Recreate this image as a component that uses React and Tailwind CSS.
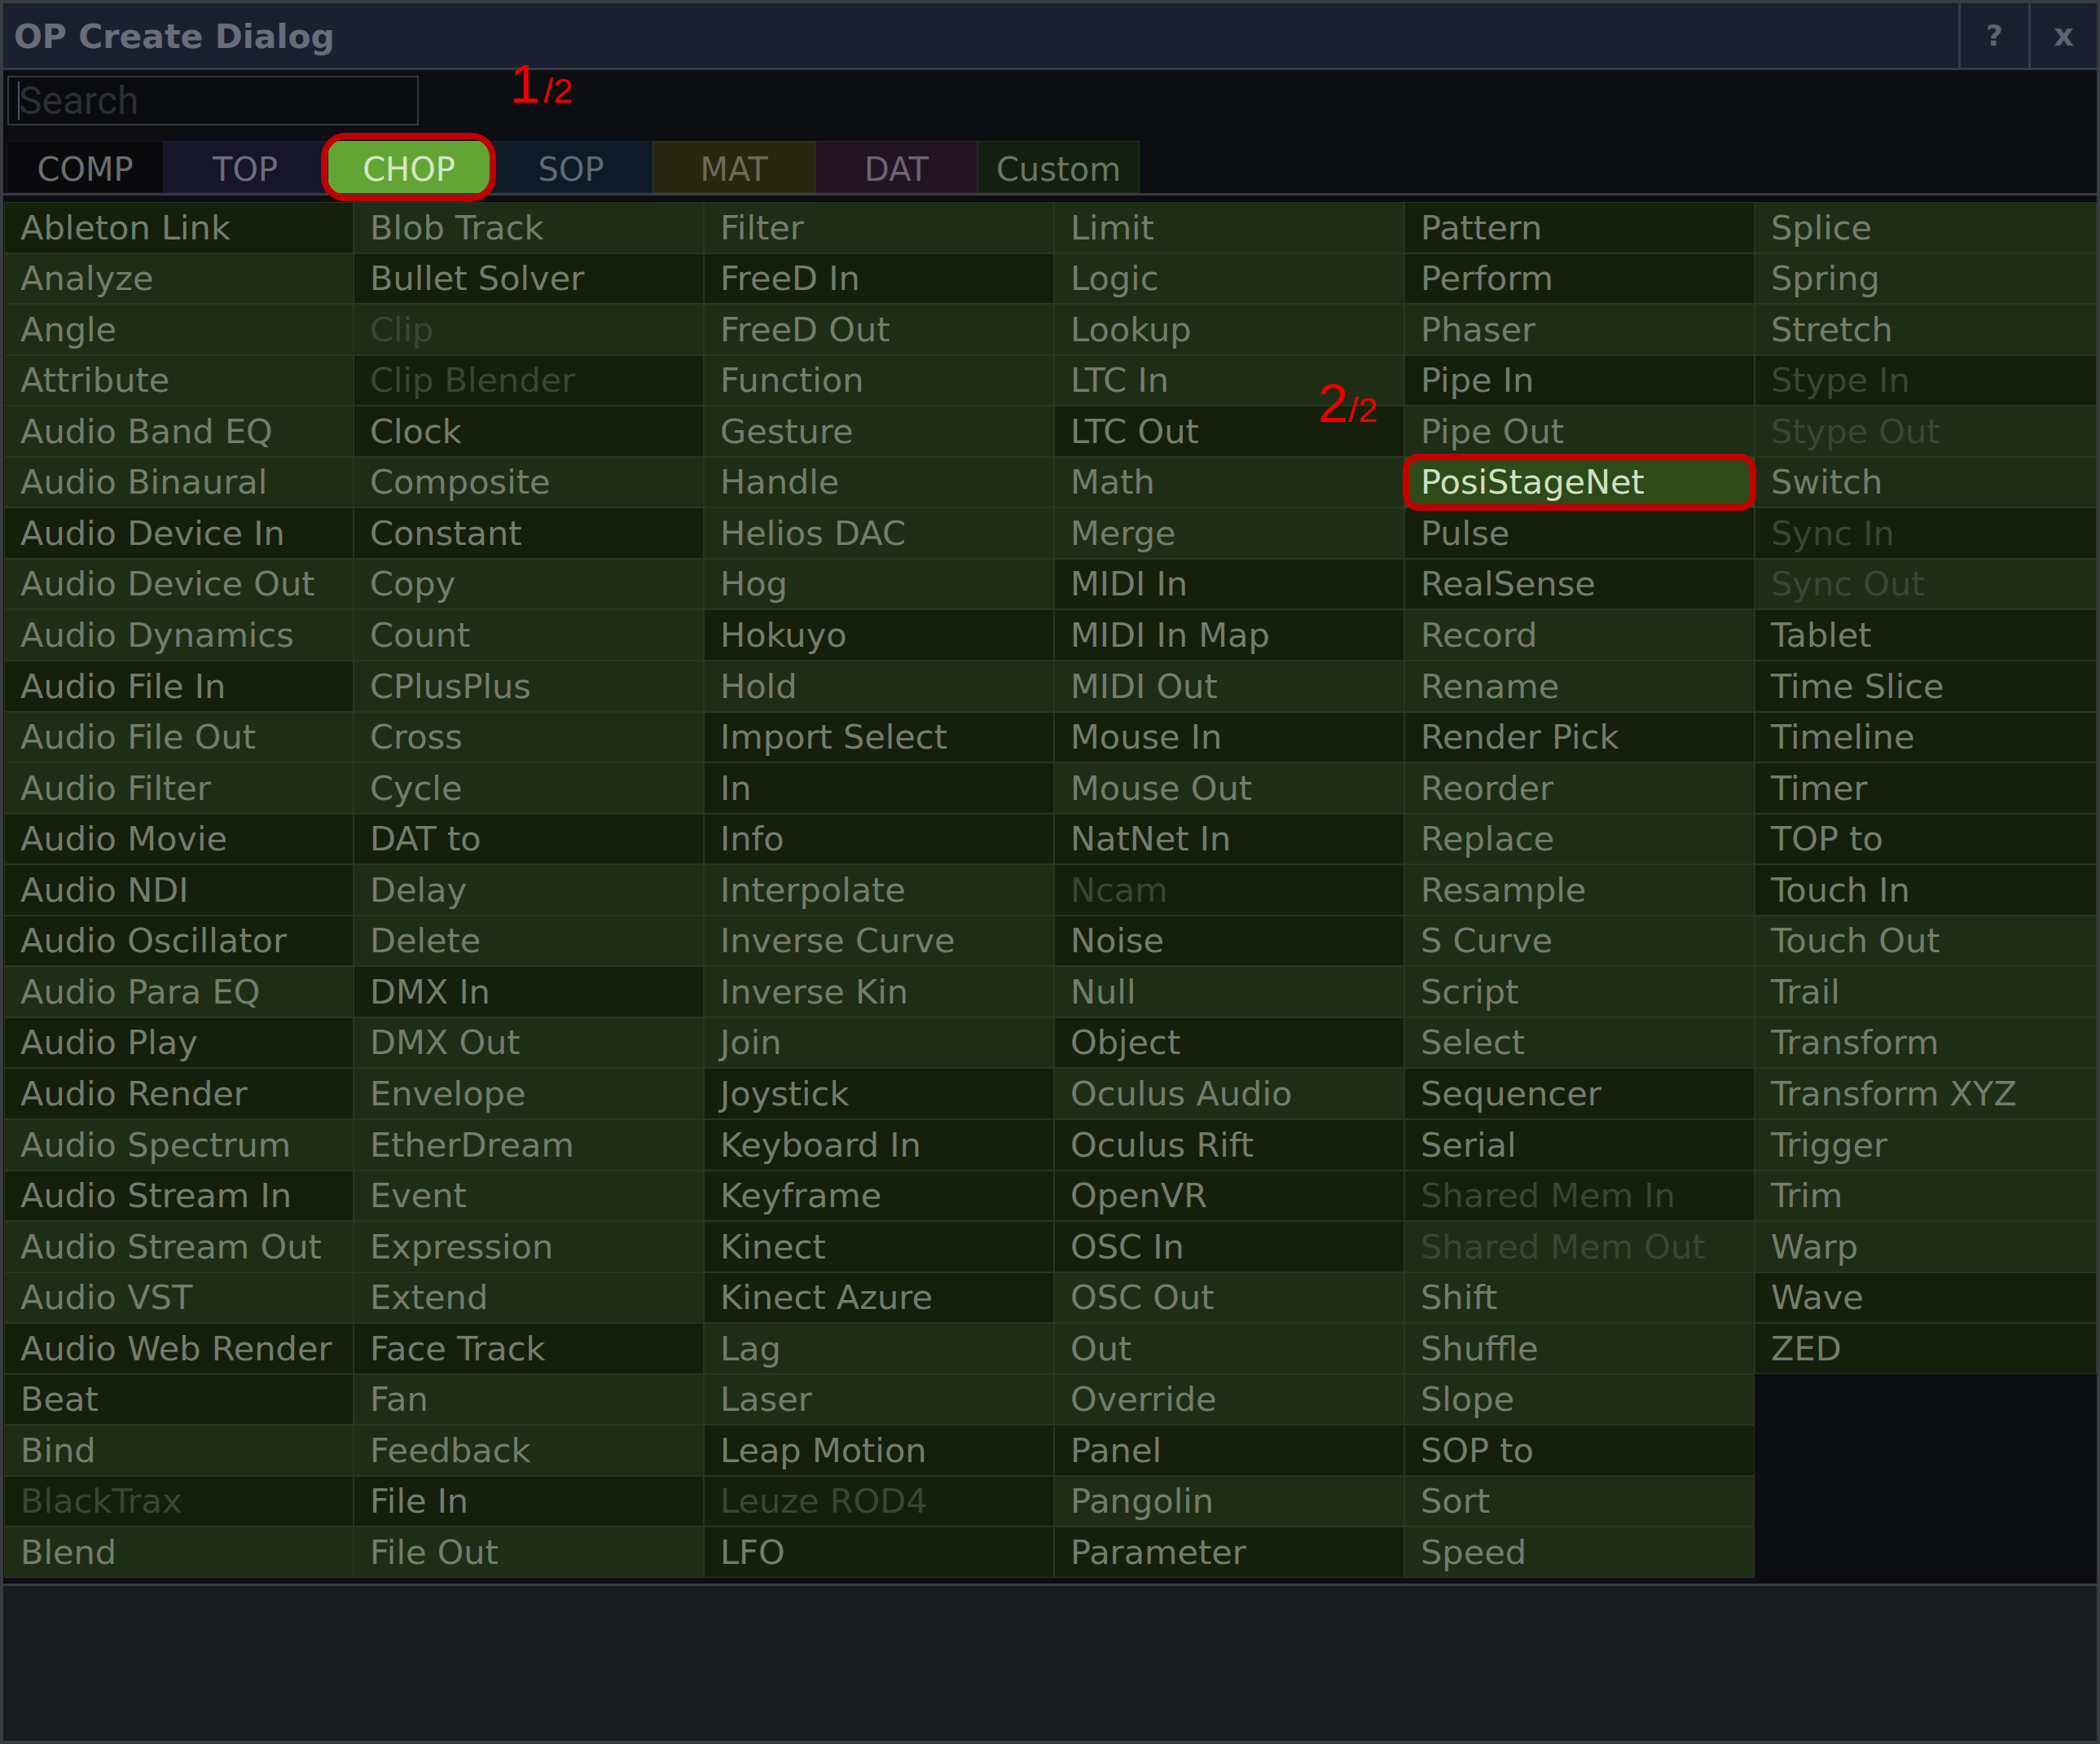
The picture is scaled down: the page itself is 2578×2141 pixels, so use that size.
import React from 'react'

const columns = [
  ['Ableton Link', 'Analyze', 'Angle', 'Attribute', 'Audio Band EQ', 'Audio Binaural', 'Audio Device In', 'Audio Device Out', 'Audio Dynamics', 'Audio File In', 'Audio File Out', 'Audio Filter', 'Audio Movie', 'Audio NDI', 'Audio Oscillator', 'Audio Para EQ', 'Audio Play', 'Audio Render', 'Audio Spectrum', 'Audio Stream In', 'Audio Stream Out', 'Audio VST', 'Audio Web Render', 'Beat', 'Bind', 'BlackTrax', 'Blend'],
  ['Blob Track', 'Bullet Solver', 'Clip', 'Clip Blender', 'Clock', 'Composite', 'Constant', 'Copy', 'Count', 'CPlusPlus', 'Cross', 'Cycle', 'DAT to', 'Delay', 'Delete', 'DMX In', 'DMX Out', 'Envelope', 'EtherDream', 'Event', 'Expression', 'Extend', 'Face Track', 'Fan', 'Feedback', 'File In', 'File Out'],
  ['Filter', 'FreeD In', 'FreeD Out', 'Function', 'Gesture', 'Handle', 'Helios DAC', 'Hog', 'Hokuyo', 'Hold', 'Import Select', 'In', 'Info', 'Interpolate', 'Inverse Curve', 'Inverse Kin', 'Join', 'Joystick', 'Keyboard In', 'Keyframe', 'Kinect', 'Kinect Azure', 'Lag', 'Laser', 'Leap Motion', 'Leuze ROD4', 'LFO'],
  ['Limit', 'Logic', 'Lookup', 'LTC In', 'LTC Out', 'Math', 'Merge', 'MIDI In', 'MIDI In Map', 'MIDI Out', 'Mouse In', 'Mouse Out', 'NatNet In', 'Ncam', 'Noise', 'Null', 'Object', 'Oculus Audio', 'Oculus Rift', 'OpenVR', 'OSC In', 'OSC Out', 'Out', 'Override', 'Panel', 'Pangolin', 'Parameter'],
  ['Pattern', 'Perform', 'Phaser', 'Pipe In', 'Pipe Out', 'PosiStageNet', 'Pulse', 'RealSense', 'Record', 'Rename', 'Render Pick', 'Reorder', 'Replace', 'Resample', 'S Curve', 'Script', 'Select', 'Sequencer', 'Serial', 'Shared Mem In', 'Shared Mem Out', 'Shift', 'Shuffle', 'Slope', 'SOP to', 'Sort', 'Speed'],
  ['Splice', 'Spring', 'Stretch', 'Stype In', 'Stype Out', 'Switch', 'Sync In', 'Sync Out', 'Tablet', 'Time Slice', 'Timeline', 'Timer', 'TOP to', 'Touch In', 'Touch Out', 'Trail', 'Transform', 'Transform XYZ', 'Trigger', 'Trim', 'Warp', 'Wave', 'ZED'],
]

// generators get the darker cell
const dark = new Set([
  'Ableton Link', 'Audio Device In', 'Audio File In', 'Audio Movie', 'Audio NDI', 'Audio Oscillator', 'Audio Play', 'Audio Render', 'Audio Stream In', 'Audio Web Render', 'Beat', 'BlackTrax',
  'Bullet Solver', 'Clip Blender', 'Clock', 'Constant', 'DAT to', 'DMX In', 'Face Track', 'File In',
  'FreeD In', 'Hokuyo', 'Import Select', 'In', 'Info', 'Joystick', 'Keyboard In', 'Keyframe', 'Kinect', 'Kinect Azure', 'Leap Motion', 'Leuze ROD4', 'LFO',
  'LTC Out', 'MIDI In', 'MIDI In Map', 'Mouse In', 'NatNet In', 'Ncam', 'Noise', 'Object', 'Oculus Rift', 'OpenVR', 'OSC In', 'Panel', 'Parameter',
  'Pattern', 'Perform', 'Pipe In', 'Pulse', 'RealSense', 'Render Pick', 'Sequencer', 'Serial', 'Shared Mem In', 'SOP to',
  'Stype In', 'Sync In', 'Tablet', 'Time Slice', 'Timeline', 'Timer', 'TOP to', 'Touch In', 'Wave', 'ZED',
])

const disabled = new Set(['Clip', 'Clip Blender', 'BlackTrax', 'Leuze ROD4', 'Ncam', 'Shared Mem In', 'Shared Mem Out', 'Stype In', 'Stype Out', 'Sync In', 'Sync Out'])

const tabs = [
  { label: 'COMP', w: 'w-[193px]', cls: 'bg-[#0a0a0c] border border-[#17181b] text-[#6c6f72]' },
  { label: 'TOP', w: 'w-[200px]', cls: 'bg-[#161529] border border-[#1f1e33] text-[#6c6d7c]' },
  { label: 'CHOP', w: 'w-[200px]', active: true },
  { label: 'SOP', w: 'w-[200px]', cls: 'bg-[#0d1a28] border border-[#152433] text-[#5f6976]' },
  { label: 'MAT', w: 'w-[200px]', cls: 'bg-[#28270f] border border-[#34331a] text-[#6b6b56]' },
  { label: 'DAT', w: 'w-[199px]', cls: 'bg-[#241322] border border-[#311f2f] text-[#6d6470]' },
  { label: 'Custom', w: 'w-[199px]', cls: 'bg-[#12200f] border border-[#1f2e1c] text-[#687766]' },
]

function Cell({ name }) {
  if (name === 'PosiStageNet') {
    return (
      <div className="relative z-10 flex items-center pl-[19px] bg-[#2d4a18] border border-[#2d4a18] text-[#d0dfc3] text-[41.5px] leading-none whitespace-nowrap">
        {name}
        <span className="absolute -inset-x-[3px] -inset-y-[5px] rounded-[20px] border-[8px] border-[#c20000]" />
      </div>
    )
  }
  const bg = dark.has(name) ? 'bg-[#141f0c]' : 'bg-[#1e2d16]'
  const fg = disabled.has(name) ? 'text-[#3a4633]' : 'text-[#737d6c]'
  return (
    <div className={`flex items-center pl-[19px] border border-[#27371f] text-[41.5px] leading-none whitespace-nowrap overflow-hidden ${bg} ${fg}`}>
      {name}
    </div>
  )
}

export default function App() {
  return (
    <div className="relative w-[2578px] h-[2141px] border-4 border-[#393b40] bg-[#0d0e12] flex flex-col font-['DejaVu_Sans','Liberation_Sans',sans-serif]">
      {/* title bar */}
      <div className="h-[82px] shrink-0 flex bg-[#1b2030] border-b-[3px] border-[#343a49]">
        <div className="flex-1 flex items-center pl-[13px] pt-[4px] text-[41px] font-bold text-[#676d79]">OP Create Dialog</div>
        <div className="w-[86px] flex items-center justify-center border-l-[3px] border-[#343a49] text-[36px] font-bold text-[#5d6371]">?</div>
        <div className="w-[84px] flex items-center justify-center border-l-[3px] border-[#343a49] text-[38px] font-bold text-[#5d6371]">x</div>
      </div>

      {/* search */}
      <div className="shrink-0 pt-[7px] pl-[5px]">
        <div className="relative w-[505px] h-[61px] border-2 border-[#35373b] bg-[#0a0b0e] flex items-center pl-[12px] text-[48px] text-[#2c2e33] font-['Roboto',sans-serif]">
          <span className="absolute left-[11px] top-[5px] bottom-[5px] w-[2px] bg-[#4a5266]" />
          Search
        </div>
      </div>

      {/* op family tabs */}
      <div className="shrink-0 mt-[19px] flex pl-[4px] border-b-[3px] border-[#393b40]">
        {tabs.map(t =>
          t.active ? (
            <div key={t.label} className={`relative h-[64px] ${t.w} pl-[2px]`}>
              <div className="h-full pt-[5px] rounded-[12px] bg-[#62a534] flex items-center justify-center text-[40px] text-[#d3e8c3]">{t.label}</div>
              <span className="absolute -left-[7px] -right-[8px] -top-[10px] -bottom-[10px] rounded-[30px] border-[8px] border-[#c20000]" />
            </div>
          ) : (
            <div key={t.label} className={`h-[64px] pt-[5px] ${t.w} flex items-center justify-center text-[40px] ${t.cls}`}>{t.label}</div>
          )
        )}
      </div>

      {/* operator grid */}
      <div className="shrink-0 mt-[8px] pl-[1px] h-[1689px] grid grid-rows-27 grid-flow-col grid-cols-[429px_repeat(4,430px)_1fr]">
        {columns.flat().map(n => <Cell key={n} name={n} />)}
      </div>

      <div className="shrink-0 h-[7px]" />
      <div className="flex-1 border-t-[3px] border-[#393b40] bg-[#1b1c1f]" />

      {/* page annotations */}
      <div className="absolute left-[622px] top-[65px] flex items-baseline leading-none text-[#ee0000] font-['Liberation_Sans',sans-serif]">
        <span className="text-[67px]">1</span>
        <span className="ml-[4px] text-[43px]">/2</span>
      </div>
      <div className="absolute left-[1614px] top-[457px] flex items-baseline leading-none text-[#ee0000] font-['Liberation_Sans',sans-serif]">
        <span className="text-[67px]">2</span>
        <span className="text-[43px]">/2</span>
      </div>
    </div>
  )
}
